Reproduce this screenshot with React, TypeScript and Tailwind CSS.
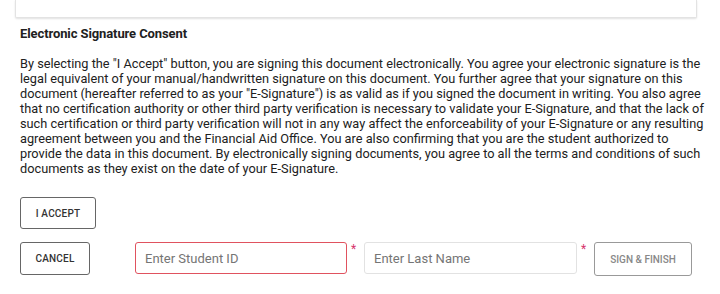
export default function App() {
    return (
        <div className="h-[294px] w-[720px] overflow-hidden bg-white font-['Roboto',sans-serif] text-[#212121]">
            <div className="ml-[15px] h-[18px] w-[682px] rounded-b-[2px] border border-t-0 border-[#e3e3e3] bg-white shadow-[0_1px_2px_rgba(0,0,0,0.12)]" />

            <div className="px-5">
                <h2 className="mt-[8px] text-[13px] leading-[16px] font-bold tracking-[-0.1px]">Electronic Signature Consent</h2>

                <p className="mt-[14px] w-[684px] text-[12.75px] leading-[15px]">
                    By selecting the "I Accept" button, you are signing this document electronically. You agree your electronic signature is the
                    legal equivalent of your manual/handwritten signature on this document. You further agree that your signature on this
                    document (hereafter referred to as your "E-Signature") is as valid as if you signed the document in writing. You also agree
                    that no certification authority or other third party verification is necessary to validate your E-Signature, and that the lack of
                    such certification or third party verification will not in any way affect the enforceability of your E-Signature or any resulting
                    agreement between you and the Financial Aid Office. You are also confirming that you are the student authorized to
                    provide the data in this document. By electronically signing documents, you agree to all the terms and conditions of such
                    documents as they exist on the date of your E-Signature.
                </p>

                <button
                    type="button"
                    className="mt-[21px] flex h-[32px] w-[76px] items-center justify-center rounded-[3px] border border-[#666] text-[10px] font-medium tracking-[0.2px] text-[#333] uppercase"
                >
                    I Accept
                </button>

                <div className="mt-[13px] flex items-start">
                    <button
                        type="button"
                        className="flex h-[33px] w-[70px] items-center justify-center rounded-[3px] border border-[#666] text-[10px] font-medium tracking-[0.2px] text-[#333] uppercase"
                    >
                        Cancel
                    </button>

                    <div className="ml-[45px] flex items-start">
                        <input
                            type="text"
                            placeholder="Enter Student ID"
                            className="h-[32px] w-[212px] rounded-[3px] border border-[#e0525f] px-[9px] text-[13px] outline-none placeholder:text-[#757575]"
                        />
                        <span className="ml-[4px] w-[13px] text-[12px] leading-[14px] text-[#d6336c]">*</span>
                    </div>

                    <div className="flex items-start">
                        <input
                            type="text"
                            placeholder="Enter Last Name"
                            className="h-[32px] w-[213px] rounded-[3px] border border-[#e2e2e2] px-[9px] text-[13px] outline-none placeholder:text-[#757575]"
                        />
                        <span className="ml-[4px] w-[13px] text-[12px] leading-[14px] text-[#d6336c]">*</span>
                    </div>

                    <button
                        type="button"
                        className="flex h-[34px] w-[98px] items-center justify-center rounded-[3px] border border-[#999] text-[10px] font-medium text-[#888] uppercase"
                    >
                        Sign &amp; Finish
                    </button>
                </div>
            </div>
        </div>
    );
}
